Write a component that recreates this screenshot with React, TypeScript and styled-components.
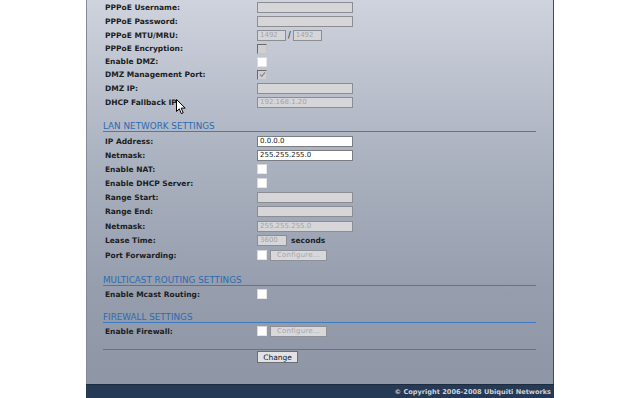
import styled, { createGlobalStyle } from 'styled-components';

const GlobalStyle = createGlobalStyle`
  html, body {
    margin: 0;
    padding: 0;
    background: #ffffff;
  }
  body {
    font-family: "DejaVu Sans", Verdana, sans-serif;
  }
`;

const Page = styled.div`
  position: relative;
  width: 468px;
  height: 398px;
  margin: 0 auto;
  display: flex;
  flex-direction: column;
`;

const Panel = styled.div`
  flex: 1;
  display: flex;
  flex-direction: column;
  padding: 0 17px 0 16px;
  border-left: 1px solid #868a94;
  border-right: 1px solid #454a55;
  background: linear-gradient(
    180deg,
    #cfd3de 0px,
    #bcc2ce 80px,
    #a7aebc 180px,
    #969dad 290px,
    #8e95a5 385px
  );
`;

const Row = styled.div<{ $h?: number }>`
  display: grid;
  grid-template-columns: 154px 1fr;
  align-items: center;
  height: ${(p) => p.$h ?? 14}px;
`;

const Label = styled.span`
  padding-left: 2px;
  font-size: 7.5px;
  font-weight: 700;
  color: #1b1d22;
  white-space: nowrap;
`;

const Value = styled.div`
  display: flex;
  align-items: center;
  gap: 3px;
`;

const Field = styled.input<{ $w?: number }>`
  box-sizing: border-box;
  width: ${(p) => p.$w ?? 96}px;
  height: 11px;
  margin: 0;
  padding: 0 2px;
  border: 1px solid ${(p) => (p.disabled ? '#8b8d92' : '#7b7d82')};
  background: ${(p) => (p.disabled ? '#d6d6d8' : '#ffffff')};
  color: ${(p) => (p.disabled ? '#a2a4a8' : '#222222')};
  font-family: "DejaVu Sans", Verdana, sans-serif;
  font-size: 7px;
  outline: none;
`;

const Slash = styled.span`
  font-size: 8px;
  color: #1b1d22;
  margin: 0 -1px;
`;

const Unit = styled(Label)`
  padding-left: 1px;
`;

const Check = styled.span<{ $disabled?: boolean }>`
  box-sizing: border-box;
  display: inline-flex;
  align-items: center;
  justify-content: center;
  width: 10px;
  height: 10px;
  background: ${(p) => (p.$disabled ? '#d0d0d2' : '#ffffff')};
  border: 1px solid ${(p) => (p.$disabled ? '#c4c4c6' : '#e6e6e8')};
  border-top-color: ${(p) => (p.$disabled ? '#6a6a6e' : '#d8d8da')};
  border-left-color: ${(p) => (p.$disabled ? '#6a6a6e' : '#d8d8da')};
`;

const SmallButton = styled.span`
  box-sizing: border-box;
  display: inline-flex;
  align-items: center;
  justify-content: center;
  width: 57px;
  height: 11px;
  background: #d8d8da;
  border: 1px solid #8e9096;
  color: #a4a6aa;
  font-size: 7px;
  letter-spacing: 0.2px;
`;

const Heading = styled.div<{ $top?: number; $bottom?: number }>`
  margin-top: ${(p) => p.$top ?? 12}px;
  margin-bottom: ${(p) => p.$bottom ?? 2}px;
  height: 10px;
  line-height: 10px;
  border-bottom: 1px solid #3c7cc4;
  font-size: 8.8px;
  color: #2c6cb2;
  white-space: nowrap;
`;

const Divider = styled.div`
  margin-top: 11px;
  height: 1px;
  background: #3c7cc4;
`;

const ChangeButton = styled.span`
  box-sizing: border-box;
  display: inline-flex;
  align-items: center;
  justify-content: center;
  width: 41px;
  height: 12px;
  background: #e2e2e4;
  border: 1px solid #6c6e74;
  color: #15171c;
  font-size: 7.5px;
`;

const Footer = styled.div`
  height: 13px;
  display: flex;
  align-items: center;
  justify-content: flex-end;
  padding-right: 3px;
  background: #263a55;
  border-top: 1px solid #1c2b40;
  color: #cdd2da;
  font-size: 6.6px;
  font-weight: 700;
  white-space: nowrap;
`;

const Cursor = styled.svg`
  position: absolute;
  left: 90px;
  top: 99px;
`;

const Tick = () => (
  <svg width="7" height="7" viewBox="0 0 7 7">
    <path d="M1 3.5 L2.8 5.3 L6 1.3" fill="none" stroke="#8a8a8e" strokeWidth="1.2" />
  </svg>
);

const App = () => {
  return (
    <>
      <GlobalStyle />
      <Page>
        <Panel>
          <Row>
            <Label>PPPoE Username:</Label>
            <Value>
              <Field disabled readOnly value="" />
            </Value>
          </Row>
          <Row>
            <Label>PPPoE Password:</Label>
            <Value>
              <Field disabled readOnly value="" />
            </Value>
          </Row>
          <Row>
            <Label>PPPoE MTU/MRU:</Label>
            <Value>
              <Field disabled readOnly value="1492" $w={29} />
              <Slash>/</Slash>
              <Field disabled readOnly value="1492" $w={29} />
            </Value>
          </Row>
          <Row $h={13}>
            <Label>PPPoE Encryption:</Label>
            <Value>
              <Check $disabled />
            </Value>
          </Row>
          <Row $h={13}>
            <Label>Enable DMZ:</Label>
            <Value>
              <Check />
            </Value>
          </Row>
          <Row $h={13}>
            <Label>DMZ Management Port:</Label>
            <Value>
              <Check $disabled>
                <Tick />
              </Check>
            </Value>
          </Row>
          <Row>
            <Label>DMZ IP:</Label>
            <Value>
              <Field disabled readOnly value="" />
            </Value>
          </Row>
          <Row>
            <Label>DHCP Fallback IP:</Label>
            <Value>
              <Field disabled readOnly value="192.168.1.20" />
            </Value>
          </Row>

          <Heading>LAN NETWORK SETTINGS</Heading>
          <Row>
            <Label>IP Address:</Label>
            <Value>
              <Field readOnly value="0.0.0.0" />
            </Value>
          </Row>
          <Row>
            <Label>Netmask:</Label>
            <Value>
              <Field readOnly value="255.255.255.0" />
            </Value>
          </Row>
          <Row>
            <Label>Enable NAT:</Label>
            <Value>
              <Check />
            </Value>
          </Row>
          <Row>
            <Label>Enable DHCP Server:</Label>
            <Value>
              <Check />
            </Value>
          </Row>
          <Row>
            <Label>Range Start:</Label>
            <Value>
              <Field disabled readOnly value="" />
            </Value>
          </Row>
          <Row $h={15}>
            <Label>Range End:</Label>
            <Value>
              <Field disabled readOnly value="" />
            </Value>
          </Row>
          <Row>
            <Label>Netmask:</Label>
            <Value>
              <Field disabled readOnly value="255.255.255.0" />
            </Value>
          </Row>
          <Row>
            <Label>Lease Time:</Label>
            <Value>
              <Field disabled readOnly value="3600" $w={30} />
              <Unit>seconds</Unit>
            </Value>
          </Row>
          <Row $h={16}>
            <Label>Port Forwarding:</Label>
            <Value>
              <Check />
              <SmallButton>Configure...</SmallButton>
            </Value>
          </Row>

          <Heading $bottom={1}>MULTICAST ROUTING SETTINGS</Heading>
          <Row>
            <Label>Enable Mcast Routing:</Label>
            <Value>
              <Check />
            </Value>
          </Row>

          <Heading $top={11} $bottom={1}>FIREWALL SETTINGS</Heading>
          <Row>
            <Label>Enable Firewall:</Label>
            <Value>
              <Check />
              <SmallButton>Configure...</SmallButton>
            </Value>
          </Row>

          <Divider />
          <Row>
            <span />
            <Value>
              <ChangeButton>Change</ChangeButton>
            </Value>
          </Row>
        </Panel>
        <Footer>© Copyright 2006-2008 Ubiquiti Networks</Footer>
        <Cursor width="11" height="16" viewBox="0 0 11 16">
          <path
            d="M0.5 0.5 L0.5 12.5 L3.3 9.8 L5.3 14.6 L7.2 13.8 L5.2 9.1 L9.2 9.1 Z"
            fill="#ffffff"
            stroke="#000000"
            strokeWidth="1"
            strokeLinejoin="round"
          />
        </Cursor>
      </Page>
    </>
  );
};

export default App;
